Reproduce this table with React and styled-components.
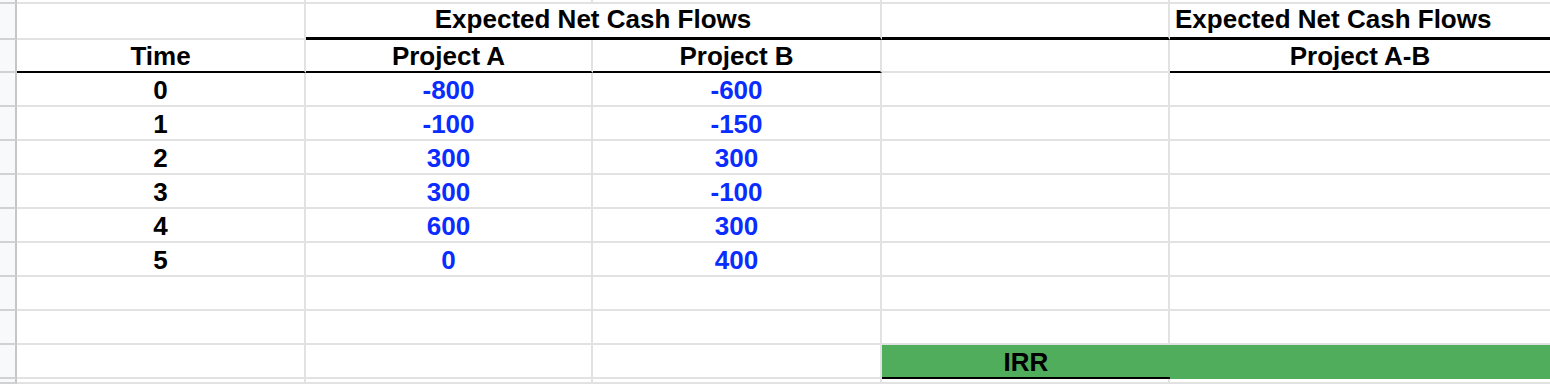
import React from 'react';
import styled, { createGlobalStyle } from 'styled-components';

const GlobalStyle = createGlobalStyle`
  html, body {
    margin: 0;
    padding: 0;
    background: #fff;
    overflow: hidden;
  }
`;

const Sheet = styled.div`
  display: grid;
  grid-template-columns: 17px 289px 287px 289px 288px 400px;
  grid-template-rows: 4px 36px 33px repeat(9, 34px) 5px;
  width: 1570px;
  height: 384px;
  font-family: "Liberation Sans", Arial, sans-serif;
  font-weight: 700;
  font-size: 26px;
  line-height: 30px;
`;

const RowHead = styled.div`
  box-sizing: border-box;
  background: #f8f9fa;
  border-right: 2px solid #c4c7c5;
  border-bottom: 2px solid #d0d3d4;
`;

const rules = {
  thick: '3px solid #000',
  black: '2px solid #000',
  grid: '2px solid #e2e2e2',
};

const Cell = styled.div`
  box-sizing: border-box;
  min-width: 0;
  display: flex;
  align-items: flex-end;
  justify-content: ${p => (p.$align === 'left' ? 'flex-start' : 'center')};
  padding: 0 ${p => (p.$wide ? 25 : 5)}px ${p => p.$pb || 0}px 5px;
  grid-column: span ${p => p.$span || 1};
  border-right: ${p => (p.$open ? 'none' : '2px solid #e2e2e2')};
  border-bottom: ${p => rules[p.$rule || 'grid']};
  background: ${p => p.$fill || '#fff'};
  color: ${p => (p.$blue ? '#0a2cff' : '#000')};
  white-space: nowrap;
`;

const flows = [
  [0, -800, -600],
  [1, -100, -150],
  [2, 300, 300],
  [3, 300, -100],
  [4, 600, 300],
  [5, 0, 400],
];

const green = '#50ad5c';

function EmptyRow({ count = 5 }) {
  return (
    <>
      <RowHead />
      {Array.from({ length: count }).map((_, i) => (
        <Cell key={i} $open={i === count - 1} />
      ))}
    </>
  );
}

export default function App() {
  return (
    <>
      <GlobalStyle />
      <Sheet>
        <EmptyRow />

        <RowHead />
        <Cell $pb={4} />
        <Cell $span={2} $rule="thick" $pb={3}>Expected Net Cash Flows</Cell>
        <Cell $rule="thick" />
        <Cell $rule="thick" $align="left" $open $pb={3}>Expected Net Cash Flows</Cell>

        <RowHead />
        <Cell $rule="black">Time</Cell>
        <Cell $rule="black">Project A</Cell>
        <Cell $rule="black">Project B</Cell>
        <Cell />
        <Cell $rule="black" $open $wide>Project A-B</Cell>

        {flows.map(([t, a, b]) => (
          <React.Fragment key={t}>
            <RowHead />
            <Cell>{t}</Cell>
            <Cell $blue>{a}</Cell>
            <Cell $blue>{b}</Cell>
            <Cell />
            <Cell $open />
          </React.Fragment>
        ))}

        <EmptyRow />
        <EmptyRow />

        <RowHead />
        <Cell />
        <Cell />
        <Cell />
        <Cell $fill={green} $rule="black" $open>IRR</Cell>
        <Cell $fill={green} $open style={{ borderBottomColor: green }} />

        <EmptyRow />
      </Sheet>
    </>
  );
}
